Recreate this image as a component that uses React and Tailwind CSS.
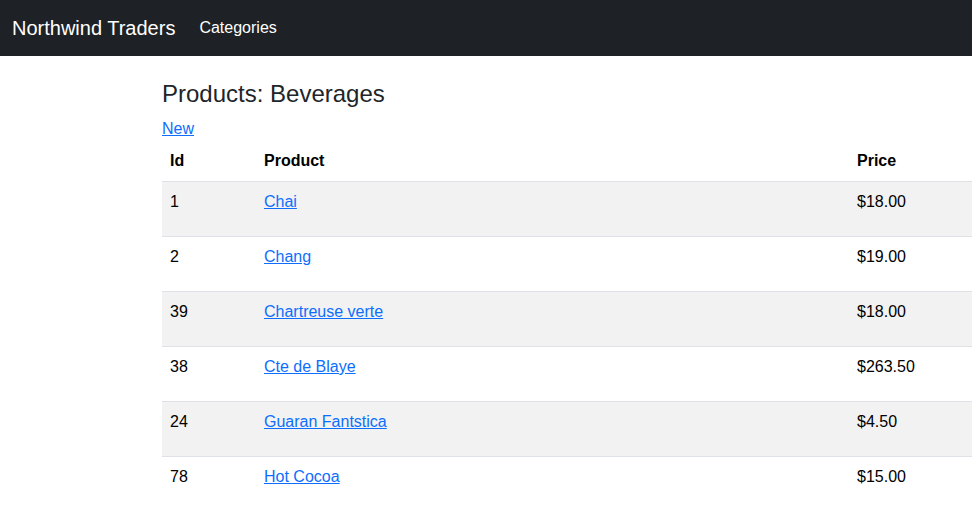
const products = [
  { id: 1, name: "Chai", price: "$18.00" },
  { id: 2, name: "Chang", price: "$19.00" },
  { id: 39, name: "Chartreuse verte", price: "$18.00" },
  { id: 38, name: "Cte de Blaye", price: "$263.50" },
  { id: 24, name: "Guaran Fantstica", price: "$4.50" },
  { id: 78, name: "Hot Cocoa", price: "$15.00" },
];

export default function App() {
  return (
    <div className="min-h-[509px] overflow-hidden bg-white font-['Liberation_Sans',Arial,sans-serif] text-[#212529]">
      <nav className="flex h-14 items-center bg-[#1e2125] px-3">
        <span className="mr-4 text-xl text-white">Northwind Traders</span>
        <a href="#" className="px-2 text-base text-white">Categories</a>
      </nav>

      <main className="w-[1000px] pl-[162px]">
        <h3 className="mt-6 mb-2 text-2xl leading-[1.2]">Products: Beverages</h3>
        <a href="#" className="text-base leading-6 text-[#0d6efd] underline">New</a>

        <table className="w-full border-collapse text-base leading-6 text-black">
          <thead>
            <tr className="border-b border-[#dee2e6]">
              <th className="w-[94px] p-2 text-left font-bold">Id</th>
              <th className="w-[593px] p-2 text-left font-bold">Product</th>
              <th className="p-2 text-left font-bold">Price</th>
            </tr>
          </thead>
          <tbody>
            {products.map((p, i) => (
              <tr key={p.id} className={`h-[55px] border-b border-[#dee2e6] ${i % 2 === 0 ? "bg-[#f2f2f2]" : "bg-white"}`}>
                <td className="p-2 align-top">{p.id}</td>
                <td className="p-2 align-top">
                  <a href="#" className="text-[#0d6efd] underline">{p.name}</a>
                </td>
                <td className="p-2 align-top">{p.price}</td>
              </tr>
            ))}
          </tbody>
        </table>
      </main>
    </div>
  );
}
